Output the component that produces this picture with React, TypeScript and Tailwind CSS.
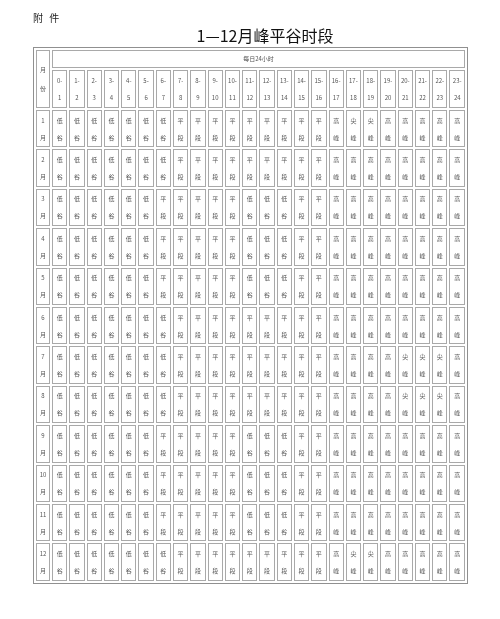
import React from "react";

type Kind = "L" | "P" | "H" | "J";

const LABELS: Record<Kind, [string, string]> = {
  L: ["低", "谷"],
  P: ["平", "段"],
  H: ["高", "峰"],
  J: ["尖", "峰"],
};

// build a row from runs like [["L",7],["P",9],...]
const run = (parts: [Kind, number][]): Kind[] =>
  parts.flatMap(([k, n]) => Array<Kind>(n).fill(k));

const WINTER = run([["L", 7], ["P", 9], ["H", 1], ["J", 2], ["H", 5]]);
const PLAIN = run([["L", 7], ["P", 9], ["H", 8]]);
const SPRING = run([["L", 6], ["P", 5], ["L", 3], ["P", 2], ["H", 8]]);
const SUMMER = run([["L", 7], ["P", 9], ["H", 4], ["J", 3], ["H", 1]]);

const MONTHS: Kind[][] = [
  WINTER, PLAIN, SPRING, SPRING, SPRING, PLAIN,
  SUMMER, SUMMER, SPRING, SPRING, SPRING, WINTER,
];

const HOURS = Array.from({ length: 24 }, (_, i) => i);

const cell = "border border-[#a9a9a9] p-0 text-center align-middle";

export default function App() {
  return (
    <div
      className="w-[500px] h-[619px] bg-white text-[#333] [will-change:transform]"
      style={{ fontFamily: '"Noto Sans CJK SC", "Noto Sans", sans-serif' }}
    >
      {/* page header */}
      <div className="pl-[33px] pt-[11px] text-[10px] leading-[13px] tracking-[2px] text-[#222]">附 件</div>
      <h1 className="pl-[30px] mt-[1px] text-center text-[16px] leading-[20px] font-normal text-[#111]">
        1—12月峰平谷时段
      </h1>

      <table className="ml-[33px] mt-[2px] w-[435px] table-fixed border-separate border-spacing-[2px] border border-[#909090] text-[6px] text-[#555]">
        <colgroup>
          <col className="w-[14px]" />
          {HOURS.map((h) => (
            <col key={h} />
          ))}
        </colgroup>
        <thead>
          <tr className="h-[18px]">
            <th rowSpan={2} className={`${cell} font-normal leading-[19px]`}>
              月<br />份
            </th>
            <th colSpan={24} className={`${cell} font-normal leading-[8px]`}>
              每日24小时
            </th>
          </tr>
          <tr className="h-[38px]">
            {HOURS.map((h) => (
              <th key={h} className={`${cell} font-normal leading-[17px]`}>
                {h}-<br />
                {h + 1}
              </th>
            ))}
          </tr>
        </thead>
        <tbody>
          {MONTHS.map((row, m) => (
            <tr key={m} className="h-[37.4px]">
              <td className={`${cell} leading-[17px]`}>
                {m + 1}
                <br />月
              </td>
              {row.map((k, i) => (
                <td key={i} className={`${cell} leading-[17px]`}>
                  {LABELS[k][0]}
                  <br />
                  {LABELS[k][1]}
                </td>
              ))}
            </tr>
          ))}
        </tbody>
      </table>
    </div>
  );
}
